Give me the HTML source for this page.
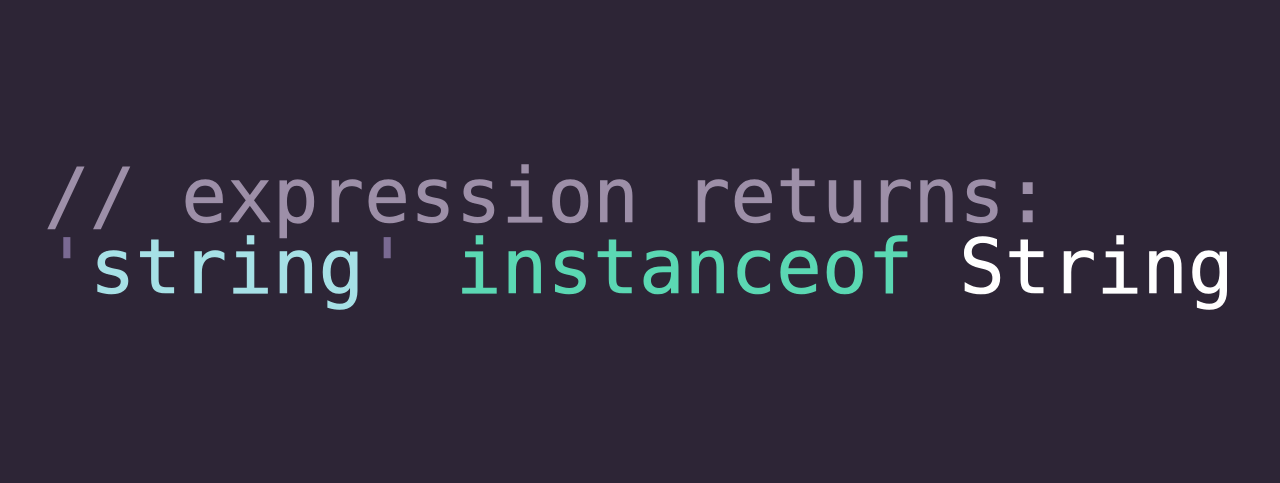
<!DOCTYPE html>
<html><head><style>
html,body{margin:0;padding:0;}
body{width:1280px;height:483px;background:#2d2536;overflow:hidden;position:relative;}
.l{position:absolute;left:44px;font-family:"DejaVu Sans Mono","Liberation Mono",monospace;font-size:76px;line-height:70px;white-space:pre;-webkit-text-stroke:0.6px currentColor;}
.c{color:#9d8fa8}.q{color:#7a6a93}.s{color:#a6e1e6}.k{color:#5bd8b3}.w{color:#ffffff}
</style></head><body>
<div class="l c" style="top:161px">// expression returns:</div>
<div class="l" style="top:232px"><span class="q">'</span><span class="s">string</span><span class="q">'</span> <span class="k">instanceof</span> <span class="w">String</span></div>
</body></html>
